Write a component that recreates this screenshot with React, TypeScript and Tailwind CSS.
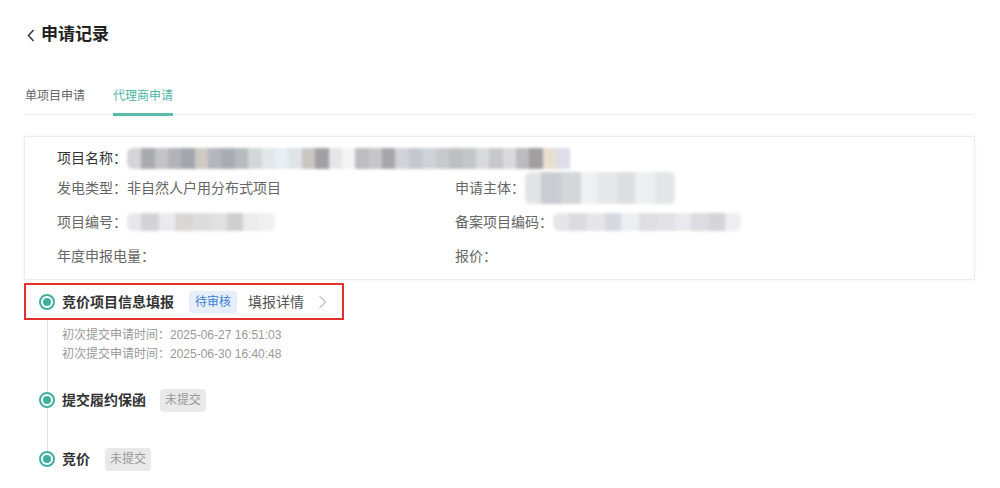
import React from "react";

const FONT = '"Liberation Sans", "Noto Sans CJK SC", sans-serif';

function Blur({ blocks, className }: { blocks: string[]; className: string }) {
  return (
    <div className={"flex overflow-hidden rounded-[6px] blur-[1.5px] " + className}>
      {blocks.map((b, i) => (
        <div key={i} className={"h-full " + b} />
      ))}
    </div>
  );
}

function Dot() {
  return (
    <div className="flex h-[16px] w-[16px] shrink-0 items-center justify-center rounded-full border-2 border-[#3fb0a0] bg-white">
      <div className="h-[8px] w-[8px] rounded-full bg-[#3fb0a0]" />
    </div>
  );
}

export default function App() {
  return (
    <div
      className="h-[488px] w-full overflow-hidden bg-white px-[24px] pt-[23px]"
      style={{ fontFamily: FONT }}
    >
      {/* Title */}
      <div className="flex h-[24px] items-center pl-[3px]">
        <svg width="8" height="13" viewBox="0 0 8 13" className="mr-[6px]">
          <path d="M6.5 1 L1.5 6.5 L6.5 12" fill="none" stroke="#333" strokeWidth="1.5" />
        </svg>
        <span className="text-[17px] font-bold leading-[24px] text-[#222]">申请记录</span>
      </div>

      {/* Tabs */}
      <div className="mt-[41px] mr-[3px] ml-[1px] flex h-[27px] gap-[28px] border-b border-[#ececec]">
        <div className="flex h-[28px] flex-col">
          <span className="text-[12px] leading-[17px] text-[#666]">单项目申请</span>
        </div>
        <div className="flex h-[28px] flex-col">
          <span className="text-[12px] leading-[17px] text-[#4fb5a5]">代理商申请</span>
          <div className="mt-[8px] h-[3px] w-full bg-[#5cbcac]" />
        </div>
      </div>

      {/* Card */}
      <div className="mt-[21px] mr-[1px] border border-[#ededed] pb-[13px] pl-[32px] pt-[11px] text-[14px] shadow-[0_0_4px_rgba(0,0,0,0.05)]">
        <div className="flex h-[20px] items-center">
          <span className="leading-[20px] text-[#333]">项目名称：</span>
          <Blur
            className="h-[21px] w-[448px]"
            blocks={[
              "w-[14px] bg-[#d5d5d8]",
              "w-[14px] bg-[#a9aab0]",
              "w-[13px] bg-[#c4c4c8]",
              "w-[13px] bg-[#b2b3b8]",
              "w-[14px] bg-[#a4a6ac]",
              "w-[13px] bg-[#cfc9c4]",
              "w-[13px] bg-[#b3b6bd]",
              "w-[14px] bg-[#a9adb3]",
              "w-[13px] bg-[#b8bcbf]",
              "w-[14px] bg-[#d3d7da]",
              "w-[13px] bg-[#e3e7ea]",
              "w-[13px] bg-[#e8eef3]",
              "w-[14px] bg-[#dfe4e8]",
              "w-[13px] bg-[#c9c6c0]",
              "w-[14px] bg-[#9fa1a5]",
              "w-[13px] bg-[#e6e6e6]",
              "w-[13px] bg-[#f4f4f4]",
              "w-[14px] bg-[#bdbdc1]",
              "w-[13px] bg-[#c6c6c9]",
              "w-[13px] bg-[#a6a6aa]",
              "w-[14px] bg-[#d0d3d7]",
              "w-[13px] bg-[#c2c8ce]",
              "w-[14px] bg-[#cfd3d8]",
              "w-[13px] bg-[#c7c9cc]",
              "w-[13px] bg-[#bdc0c3]",
              "w-[14px] bg-[#c3c5c8]",
              "w-[13px] bg-[#d8dadc]",
              "w-[14px] bg-[#c8c8ca]",
              "w-[13px] bg-[#d9dadc]",
              "w-[13px] bg-[#bcbcbf]",
              "w-[14px] bg-[#a09ea0]",
              "w-[13px] bg-[#e8dfcf]",
              "w-[14px] bg-[#dddde9]",
            ]}
          />
        </div>

        <div className="mt-[10px] grid grid-cols-[398px_1fr] text-[#666]">
          <span className="leading-[20px]">发电类型：非自然人户用分布式项目</span>
          <div className="flex h-[20px] items-center">
            <span className="leading-[20px]">申请主体：</span>
            <Blur
              className="-my-[6px] h-[32px] w-[150px]"
              blocks={[
                "w-[16px] bg-[#e2e4e6]",
                "w-[20px] bg-[#c9cdd1]",
                "w-[20px] bg-[#d4d6d9]",
                "w-[16px] bg-[#eef1f4]",
                "w-[20px] bg-[#e6e8ea]",
                "w-[18px] bg-[#dcdfe2]",
                "w-[20px] bg-[#eeeff1]",
                "w-[20px] bg-[#e3e5e7]",
              ]}
            />
          </div>
        </div>

        <div className="mt-[14px] grid grid-cols-[398px_1fr] text-[#666]">
          <div className="flex h-[20px] items-center">
            <span className="leading-[20px]">项目编号：</span>
            <Blur
              className="h-[18px] w-[148px]"
              blocks={[
                "w-[14px] bg-[#e8e8ea]",
                "w-[18px] bg-[#d3d3d6]",
                "w-[16px] bg-[#ebebed]",
                "w-[18px] bg-[#d9d6d6]",
                "w-[18px] bg-[#dddcdc]",
                "w-[16px] bg-[#e2e1e1]",
                "w-[16px] bg-[#d0cfcf]",
                "w-[16px] bg-[#ececec]",
                "w-[16px] bg-[#f0f0f0]",
              ]}
            />
          </div>
          <div className="flex h-[20px] items-center">
            <span className="leading-[20px]">备案项目编码：</span>
            <Blur
              className="h-[18px] w-[188px]"
              blocks={[
                "w-[16px] bg-[#e6e6ea]",
                "w-[18px] bg-[#dcdbe0]",
                "w-[18px] bg-[#e6e6ea]",
                "w-[16px] bg-[#d7d8e0]",
                "w-[18px] bg-[#eceef2]",
                "w-[18px] bg-[#dedee3]",
                "w-[18px] bg-[#e2e2e7]",
                "w-[16px] bg-[#eaeaee]",
                "w-[18px] bg-[#dcdce1]",
                "w-[16px] bg-[#d4d4d9]",
                "w-[16px] bg-[#eeeef2]",
              ]}
            />
          </div>
        </div>

        <div className="mt-[14px] grid grid-cols-[398px_1fr] text-[#666]">
          <span className="leading-[20px]">年度申报电量：</span>
          <span className="leading-[20px]">报价：</span>
        </div>
      </div>

      {/* Timeline */}
      <div className="relative mt-[3px]">
        <div className="absolute left-[23px] top-[37px] h-[132px] w-px bg-[#e0e0e0]" />

        <div className="relative flex h-[37px] w-[320px] items-center border-2 border-[#e3312d] pl-[13px]">
          <Dot />
          <span className="ml-[7px] text-[14px] font-bold leading-[20px] text-[#333]">
            竞价项目信息填报
          </span>
          <span className="ml-[15px] flex h-[22px] items-center rounded-[3px] bg-[#e6eef9] px-[6px] text-[12px] text-[#3b7fd6]">
            待审核
          </span>
          <span className="ml-[11px] text-[14px] leading-[20px] text-[#555]">填报详情</span>
          <svg width="9" height="14" viewBox="0 0 9 14" className="ml-[14px]">
            <path d="M1.5 1 L7.5 7 L1.5 13" fill="none" stroke="#c4c4c4" strokeWidth="1.3" />
          </svg>
        </div>

        <div className="relative pl-[38px] pt-[6px] text-[12px] text-[#999]">
          <div className="leading-[19px]">初次提交申请时间：2025-06-27 16:51:03</div>
          <div className="leading-[19px]">初次提交申请时间：2025-06-30 16:40:48</div>
        </div>

        <div className="relative mt-[24px] flex h-[24px] items-center pl-[15px]">
          <Dot />
          <span className="ml-[7px] text-[14px] font-bold leading-[20px] text-[#333]">
            提交履约保函
          </span>
          <span className="ml-[14px] flex h-[23px] items-center rounded-[4px] bg-[#e9e9e9] px-[5px] text-[12px] text-[#999]">
            未提交
          </span>
        </div>

        <div className="relative mt-[35px] flex h-[24px] items-center pl-[15px]">
          <Dot />
          <span className="ml-[7px] text-[14px] font-bold leading-[20px] text-[#333]">竞价</span>
          <span className="ml-[15px] flex h-[23px] items-center rounded-[4px] bg-[#e9e9e9] px-[5px] text-[12px] text-[#999]">
            未提交
          </span>
        </div>
      </div>
    </div>
  );
}
